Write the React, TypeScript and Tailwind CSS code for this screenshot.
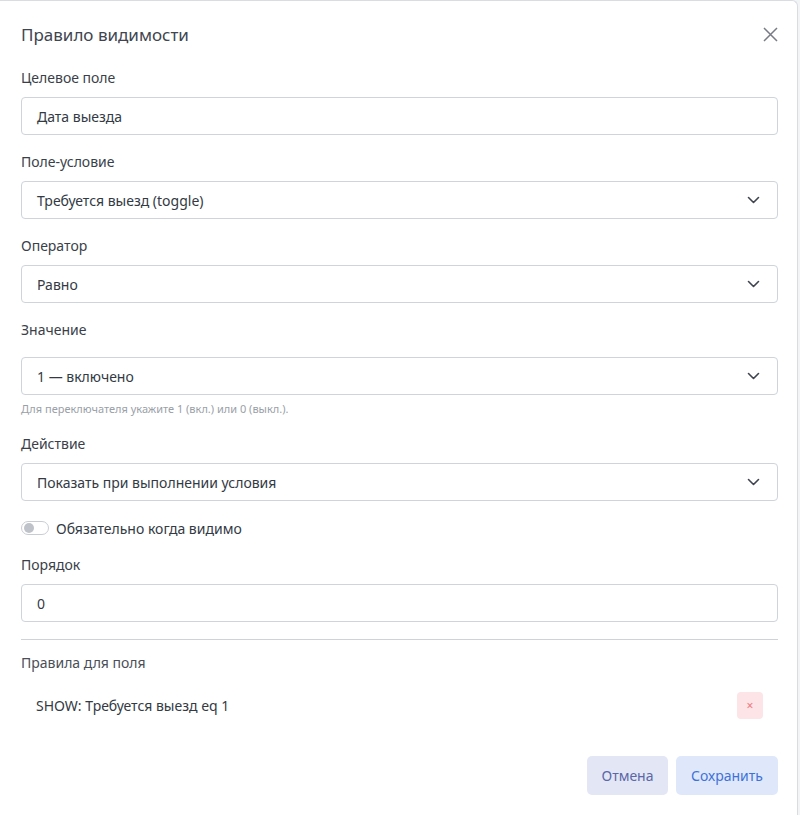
import React from "react";

const font = { fontFamily: '"Noto Sans", "Open Sans", sans-serif' };

const Chevron: React.FC = () => (
  <svg width="13" height="8" viewBox="0 0 13 8" fill="none" className="text-[#3f4450]">
    <path d="M1.5 1.5 L6.5 6.5 L11.5 1.5" stroke="currentColor" strokeWidth="1.6" strokeLinecap="round" strokeLinejoin="round" />
  </svg>
);

const Box: React.FC<{ value: string; select?: boolean }> = ({ value, select }) => (
  <div className="h-[38px] w-full rounded-[4px] border border-[#ced4da] bg-white flex items-center justify-between pl-[15px] pr-[17px] text-[14px] text-[#333a44]">
    <span>{value}</span>
    {select && <Chevron />}
  </div>
);

const Label: React.FC<{ text: string; className?: string }> = ({ text, className }) => (
  <div className={`h-5 leading-5 text-[14px] text-[#3a3f4a] ${className ?? "mb-[9px]"}`}>{text}</div>
);

export default function App() {
  return (
    <div className="w-[800px] h-[815px] bg-[#f3f4f6]" style={font}>
      <div className="w-[798px] h-[815px] bg-white border border-[#d9dce1] border-l-0 border-b-0 rounded-tr-[6px] pl-[21px] pr-[19px]">
        <div className="h-[67px] flex items-center justify-between">
          <h2 className="text-[17px] text-[#40454f] leading-none">Правило видимости</h2>
          <svg width="15" height="15" viewBox="0 0 15 15" className="text-[#777c84]">
            <path d="M1 1 L14 14 M14 1 L1 14" stroke="currentColor" strokeWidth="1.5" />
          </svg>
        </div>

        <Label text="Целевое поле" />
        <Box value="Дата выезда" />

        <div className="mt-[17px]">
          <Label text="Поле-условие" />
          <Box value="Требуется выезд (toggle)" select />
        </div>

        <div className="mt-[17px]">
          <Label text="Оператор" />
          <Box value="Равно" select />
        </div>

        <div className="mt-[17px]">
          <Label text="Значение" className="mb-[17px]" />
          <Box value="1 — включено" select />
          <div className="mt-[7px] h-[14px] leading-[14px] text-[11px] text-[#9aa0a8]">
            Для переключателя укажите 1 (вкл.) или 0 (выкл.).
          </div>
        </div>

        <div className="mt-[18px]">
          <Label text="Действие" />
          <Box value="Показать при выполнении условия" select />
        </div>

        <div className="mt-[17px] h-5 flex items-center gap-[7px]">
          <div className="w-[28px] h-[14px] rounded-full border border-[#c9cdd3] bg-white flex items-center px-[2px]">
            <div className="w-[10px] h-[10px] rounded-full bg-[#bfc3c9]" />
          </div>
          <span className="text-[14px] text-[#333a44]">Обязательно когда видимо</span>
        </div>

        <div className="mt-[17px]">
          <Label text="Порядок" />
          <Box value="0" />
        </div>

        <div className="mt-[17px] h-px bg-[#cfd3d8]" />

        <div className="mt-[13px] h-5 leading-5 text-[14px] text-[#4a4f58]">Правила для поля</div>

        <div className="mt-[19px] h-[27px] flex items-center justify-between pl-[15px] pr-[15px]">
          <span className="text-[14px] text-[#333a44]">SHOW: Требуется выезд eq 1</span>
          <button className="w-[26px] h-[27px] rounded-[4px] bg-[#fde4e6] text-[#f0787f] text-[12px] flex items-center justify-center">
            ×
          </button>
        </div>

        <div className="mt-[37px] flex justify-end gap-[8px]">
          <button className="w-[81px] h-[39px] rounded-[5px] bg-[#e3e6f4] text-[14px] text-[#5a67a8]">Отмена</button>
          <button className="w-[102px] h-[39px] rounded-[5px] bg-[#dfe8fb] text-[14px] text-[#3f72d8]">Сохранить</button>
        </div>
      </div>
    </div>
  );
}
